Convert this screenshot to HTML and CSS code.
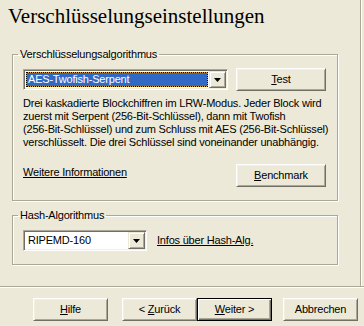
FILE: index.html
```html
<!DOCTYPE html>
<html lang="de">
<head>
<meta charset="utf-8">
<title>Verschlüsselungseinstellungen</title>
<link rel="stylesheet" href="styles.css">
</head>
<body>
<div class="main">
  <h1 class="title">Verschlüsselungseinstellungen</h1>
  <fieldset class="group group-algo">
    <legend class="legend">Verschlüsselungsalgorithmus</legend>
    <div class="row row-select">
      <div class="combo combo-wide">
        <span class="combo-value"><span class="selected">AES-Twofish-Serpent</span></span>
        <span class="combo-btn"><svg class="arrow" width="7" height="4" viewBox="0 0 7 4"><polygon points="0,0 7,0 3.5,4" fill="#000"/></svg></span>
      </div>
      <button class="btn btn-side"><u>T</u>est</button>
    </div>
    <p class="desc">Drei kaskadierte Blockchiffren im LRW-Modus. Jeder Block wird<br>zuerst mit Serpent (256-Bit-Schlüssel), dann mit Twofish<br>(256-Bit-Schlüssel) und zum Schluss mit AES (256-Bit-Schlüssel)<br>verschlüsselt. Die drei Schlüssel sind voneinander unabhängig.</p>
    <div class="row row-info">
      <a class="link link-info">Weitere Informationen</a>
      <button class="btn btn-side"><u>B</u>enchmark</button>
    </div>
  </fieldset>
  <fieldset class="group group-hash">
    <legend class="legend">Hash-Algorithmus</legend>
    <div class="row row-hash">
      <div class="combo combo-narrow">
        <span class="combo-value"><span class="plain">RIPEMD-160</span></span>
        <span class="combo-btn"><svg class="arrow" width="7" height="4" viewBox="0 0 7 4"><polygon points="0,0 7,0 3.5,4" fill="#000"/></svg></span>
      </div>
      <a class="link link-hash">Infos über Hash-Alg.</a>
    </div>
  </fieldset>
</div>
<div class="separator"></div>
<div class="buttons">
  <button class="btn btn-nav"><u>H</u>ilfe</button>
  <button class="btn btn-nav btn-back">&lt; <u>Z</u>urück</button>
  <button class="btn btn-nav btn-default"><u>W</u>eiter &gt;</button>
  <button class="btn btn-nav btn-cancel">Abbrechen</button>
</div>
</body>
</html>
```

FILE: styles.css
```css
html, body {
  margin: 0;
  padding: 0;
}
body {
  width: 364px;
  height: 326px;
  overflow: hidden;
  background: #ECE9D8;
  color: #000;
  font-family: "Liberation Sans", Arial, sans-serif;
  font-size: 11px;
  line-height: 13px;
  letter-spacing: -0.2px;
}
.main {
  width: 361px;
  height: 286px;
  box-sizing: border-box;
  border-right: 1px solid #ACA899;
  box-shadow: 1px 0 0 #fff;
  padding-top: 3px;
}
.title {
  margin: 0;
  padding-left: 8px;
  font-family: "Liberation Serif", "Times New Roman", serif;
  font-weight: normal;
  font-size: 21px;
  letter-spacing: 0;
  line-height: 26px;
  height: 26px;
}
.group {
  width: 326px;
  box-sizing: border-box;
  margin: 0 0 0 12px;
  padding: 8px 11px 13px 10px;
  border: 1px solid #ACA899;
  box-shadow: inset 1px 1px 0 #fff, 1px 1px 0 #fff;
  min-inline-size: 0;
}
.group-algo {
  margin-top: 19px;
  padding-top: 7px;
}
.group-hash {
  margin-top: 8px;
}
.legend {
  margin-left: -5px;
  padding: 0 2px;
  line-height: 13px;
  white-space: nowrap;
}
.row {
  display: flex;
}
.row-select {
  align-items: center;
  justify-content: space-between;
  height: 23px;
}
.row-info {
  justify-content: space-between;
  align-items: flex-start;
  margin-top: 15px;
}
.row-hash {
  align-items: center;
  gap: 10px;
}
.desc {
  margin: 6px 0 0;
  white-space: nowrap;
  line-height: 13px;
}
.link {
  text-decoration: underline;
  color: #000;
  white-space: nowrap;
}
.link-info {
  margin-top: 2px;
}
.combo {
  display: flex;
  height: 21px;
  box-sizing: border-box;
  border: 1px solid;
  border-color: #ACA899 #fff #fff #ACA899;
  box-shadow: inset 1px 1px 0 #716F64, inset -1px -1px 0 #F1EFE2;
  padding: 1px;
  background: #fff;
  background-clip: padding-box;
}
.combo-wide {
  width: 205px;
}
.combo-narrow {
  width: 124px;
}
.combo-value {
  flex: 1;
  display: flex;
  padding: 1px;
  min-width: 0;
}
.selected {
  flex: 1;
  box-sizing: border-box;
  border: 1px dotted #000;
  background: linear-gradient(#316AC5, #316AC5) padding-box, border-box #D9A040;
  color: #fff;
  padding-left: 1px;
  line-height: 13px;
}
.plain {
  padding-left: 2px;
  line-height: 15px;
}
.combo-btn {
  width: 17px;
  flex: none;
  box-sizing: border-box;
  display: flex;
  align-items: center;
  justify-content: center;
  background: #ECE9D8;
  border: 1px solid;
  border-color: #ECE9D8 #716F64 #716F64 #ECE9D8;
  box-shadow: inset 1px 1px 0 #fff, inset -1px -1px 0 #ACA899;
}
.arrow {
  display: block;
}
.btn {
  font-family: inherit;
  font-size: 11px;
  letter-spacing: inherit;
  line-height: 13px;
  color: #000;
  background: #ECE9D8;
  height: 23px;
  box-sizing: border-box;
  padding: 0;
  margin: 0;
  border: 1px solid;
  border-color: #fff #716F64 #716F64 #fff;
  box-shadow: inset 1px 1px 0 #F1EFE2, inset -1px -1px 0 #ACA899;
  border-radius: 0;
  text-align: center;
}
.btn-side {
  width: 90px;
}
.separator {
  height: 0;
  border-top: 1px solid #ACA899;
  border-bottom: 1px solid #fff;
}
.buttons {
  display: flex;
  margin-top: 10px;
  padding-left: 33px;
}
.btn-nav {
  width: 75px;
}
.btn-back {
  margin-left: 14px;
}
.btn-default {
  border: 1px solid #000;
  box-shadow: inset 1px 1px 0 #fff, inset -1px -1px 0 #716F64, inset -2px -2px 0 #ACA899;
}
.btn-cancel {
  margin-left: 11px;
}
```
